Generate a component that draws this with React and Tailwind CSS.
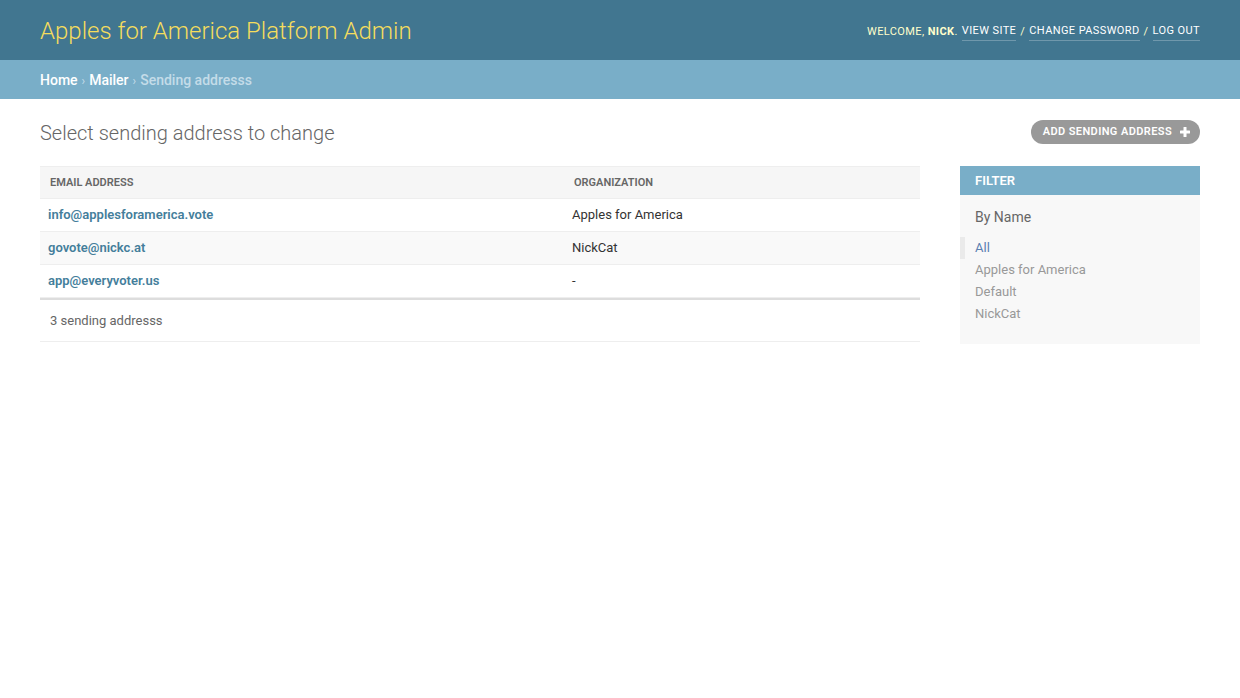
import React from 'react'

const rows = [
  { email: 'info@applesforamerica.vote', org: 'Apples for America' },
  { email: 'govote@nickc.at', org: 'NickCat' },
  { email: 'app@everyvoter.us', org: '-' },
]

const filters = ['All', 'Apples for America', 'Default', 'NickCat']

const App = () => {
  return (
    <div className="min-h-[698px] bg-white text-[#333] font-['Roboto',sans-serif]">
      {/* header */}
      <div className="h-[60px] bg-[#417690] px-10 flex items-center justify-between">
        <h1 className="text-[24px] font-light text-[#f5dd5d] leading-none pt-[2px]">Apples for America Platform Admin</h1>
        <div className="text-[11px] uppercase tracking-[0.4px] text-[#ffc] flex items-center pt-[4px]">
          <span>Welcome, <strong className="font-bold">Nick</strong>.</span>
          <a className="ml-1 text-white border-b border-white/25">View site</a>
          <span className="mx-1">/</span>
          <a className="text-white border-b border-white/25">Change password</a>
          <span className="mx-1">/</span>
          <a className="text-white border-b border-white/25">Log out</a>
        </div>
      </div>

      {/* breadcrumbs */}
      <div className="h-[39px] bg-[#79aec8] px-10 flex items-center pt-[2px] text-[14px] text-[#c4dce8]">
        <a className="text-white font-medium">Home</a>
        <span className="mx-[4px] text-[12px]">›</span>
        <a className="text-white font-medium">Mailer</a>
        <span className="mx-[4px] text-[12px]">›</span>
        <span className="font-medium">Sending addresss</span>
      </div>

      {/* content */}
      <div className="px-10 pt-5">
        <div className="flex items-center justify-between h-[26px]">
          <h2 className="text-[20px] font-light text-[#666] pt-[2px]">Select sending address to change</h2>
          <a className="h-6 rounded-[15px] bg-[#999] pl-3 pr-2.5 flex items-center gap-2 text-[11px] font-semibold uppercase tracking-[0.4px] text-white">
            Add sending address
            <svg width="10" height="10" viewBox="0 0 10 10" fill="#fff">
              <rect x="3.5" y="0" width="3" height="10" rx="0.5" />
              <rect x="0" y="3.5" width="10" height="3" rx="0.5" />
            </svg>
          </a>
        </div>

        <div className="flex gap-10 mt-[21px] items-start">
          <div className="flex-1">
            <table className="w-full border-collapse text-[13px]">
              <thead>
                <tr className="bg-[#f6f6f6] border-t border-b border-[#eee] h-[32px]">
                  <th className="w-[524px] px-2.5 pt-[2px] text-left text-[11px] font-semibold uppercase text-[#666]">Email address</th>
                  <th className="px-2.5 pt-[2px] text-left text-[11px] font-semibold uppercase text-[#666]">Organization</th>
                </tr>
              </thead>
              <tbody>
                {rows.map((r, i) => (
                  <tr key={r.email} className={`h-[33px] border-b border-[#eee] ${i % 2 === 1 ? 'bg-[#f9f9f9]' : 'bg-white'}`}>
                    <th className="px-2 text-left font-semibold text-[#447e9b]">{r.email}</th>
                    <td className="px-2 text-[#333]">{r.org}</td>
                  </tr>
                ))}
              </tbody>
            </table>
            <div className="border-t-2 border-[#ddd] border-b border-b-[#eee] h-[44px] px-2.5 flex items-center text-[13px] text-[#666]">
              3 sending addresss
            </div>
          </div>

          <div className="w-[240px] bg-[#f8f8f8] pb-[19px]">
            <h3 className="bg-[#79aec8] text-white text-[13px] font-semibold uppercase px-[15px] h-[29px] flex items-center">Filter</h3>
            <h4 className="text-[14px] text-[#666] px-[15px] mt-[12px] mb-[9px]">By Name</h4>
            <ul className="text-[13px]">
              {filters.map((f, i) => (
                <li
                  key={f}
                  className={
                    i === 0
                      ? 'border-l-[5px] border-[#eaeaea] pl-[10px] h-[22px] flex items-center text-[#5b80b2]'
                      : 'pl-[15px] h-[22px] flex items-center text-[#999]'
                  }
                >
                  {f}
                </li>
              ))}
            </ul>
          </div>
        </div>
      </div>
    </div>
  )
}

export default App
